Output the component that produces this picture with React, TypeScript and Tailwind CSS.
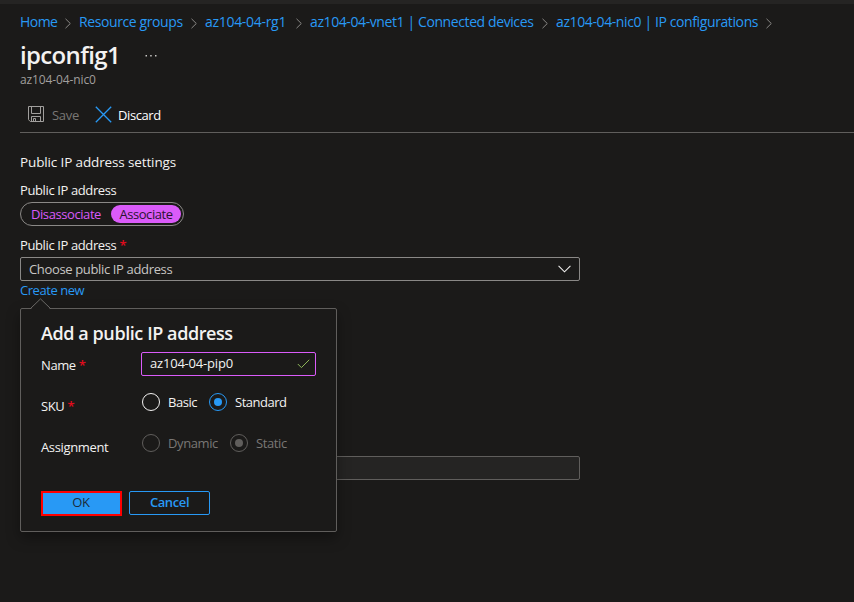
import type { ReactNode } from "react";

function Crumb({ children, className }: { children: ReactNode; className: string }) {
  return (
    <>
      <a className={`block shrink-0 whitespace-nowrap text-[#2899f5] ${className}`}>{children}</a>
      <svg className="mr-[7px] mt-[2px] h-[11px] w-[8px] shrink-0" viewBox="0 0 8 11" fill="none" stroke="#8a8886">
        <path d="M1.5 .8 6.3 5.5 1.5 10.2" />
      </svg>
    </>
  );
}

function Required() {
  return <span className="ml-[3px] font-semibold text-[#e00b1c]">*</span>;
}

function Radio({ label, tone, checked, className }: { label: string; tone: string; checked?: boolean; className: string }) {
  return (
    <label className={`flex shrink-0 items-center whitespace-nowrap ${className}`}>
      <svg className={`mr-2 size-[18px] shrink-0 ${tone}`} viewBox="0 0 18 18">
        <circle cx="9" cy="9" r="8.5" fill="none" stroke="currentColor" />
        {checked && <circle cx="9" cy="9" r="4" fill="currentColor" />}
      </svg>
      {label}
    </label>
  );
}

function AddAddressCallout() {
  return (
    <section className="absolute left-5 top-[308px] h-[224px] w-[317px] rounded-[2px] border border-[#605e5c] bg-[#1b1a19] px-5 shadow-[0_6px_14px_rgba(0,0,0,0.35)]">
      <svg className="absolute -top-[11px] left-[9px] h-[12px] w-[22px]" viewBox="0 0 22 12">
        <path d="M.5 11.5 10.5 1.3 20.5 11.5V12H.5Z" fill="#1b1a19" />
        <path d="M.3 10.7 10.5 .9 20.7 10.7" fill="none" stroke="#6c6a68" />
      </svg>
      <h2 className="mt-[12px] h-6 whitespace-nowrap text-[18px] font-semibold leading-6 tracking-[-0.42px] text-[#f3f2f1]">
        Add a public IP address
      </h2>
      <div className="mt-[7px] flex h-6">
        <div className="mt-1 w-[100px] tracking-[-0.4px]">Name<Required /></div>
        <div className="flex w-[175px] items-center justify-between rounded-[2px] border border-[#da5bf9] pl-2 pr-[5px]">
          <span className="-mt-[2px] tracking-[-0.2px]">az104-04-pip0</span>
          <svg className="h-[10px] w-[13px]" viewBox="0 0 13 10" fill="none" stroke="#8fb85a">
            <path d="M.8 5 4.4 8.6 12.2 .8" />
          </svg>
        </div>
      </div>
      <div className="mt-[17px] flex h-[18px]">
        <div className="mt-1 w-[101px] tracking-[-0.4px]">SKU<Required /></div>
        <Radio label="Basic" tone="text-[#f3f2f1]" className="w-[67px] tracking-[-0.45px]" />
        <Radio label="Standard" tone="text-[#2899f5]" checked className="tracking-[-0.5px]" />
      </div>
      <div className="mt-[23px] flex h-[18px]">
        <div className="mt-1 w-[101px] tracking-[-0.35px]">Assignment</div>
        <Radio label="Dynamic" tone="text-[#605e5c]" className="w-[88px] tracking-[-0.4px] text-[#797775]" />
        <Radio label="Static" tone="text-[#605e5c]" checked className="tracking-[-0.4px] text-[#797775]" />
      </div>
      <div className="mt-[39px] flex gap-[7px]">
        <button className="h-[25px] w-[81px] border-2 border-[#ff0000] bg-[#2899f5] pb-[3px] pr-px leading-[18px] tracking-[-0.4px] text-[#1b2b3a]">OK</button>
        <button className="h-6 w-[81px] rounded-[2px] border border-[#2899f5] pb-[2px] font-semibold leading-5 tracking-[-0.4px] text-[#2899f5]">Cancel</button>
      </div>
    </section>
  );
}

export default function App() {
  return (
    <div className="relative h-[602px] w-[854px] overflow-hidden bg-[#1b1a19] pl-5 font-['Open_Sans','Noto_Sans',sans-serif] text-[13px] leading-[18px] text-[#f3f2f1]">
      <div className="-ml-5 h-1 bg-[#252423]" />
      <nav className="mt-2 flex h-5 items-center text-[14px] leading-5">
        <Crumb className="w-[44px] tracking-[-0.55px]">Home</Crumb>
        <Crumb className="w-[111px] tracking-[-0.4px]">Resource groups</Crumb>
        <Crumb className="w-[90px] tracking-[-0.3px]">az104-04-rg1</Crumb>
        <Crumb className="w-[231px] tracking-[-0.4px]">az104-04-vnet1 | Connected devices</Crumb>
        <Crumb className="w-[209px] tracking-[-0.39px]">az104-04-nic0 | IP configurations</Crumb>
      </nav>
      <header>
        <div className="mt-[7px] flex h-[33px]">
          <h1 className="w-[125px] text-[24px] font-semibold leading-8 tracking-[-0.65px]">ipconfig1</h1>
          <svg className="mt-[16px] h-[2px] w-3" viewBox="0 0 12 2" fill="#c8c6c4">
            <path d="M.5 0H2V1.6H.5ZM5.2 0H6.7V1.6H5.2ZM10 0H11.5V1.6H10Z" />
          </svg>
        </div>
        <p className="h-4 text-[12px] leading-4 tracking-[-0.12px] text-[#a19f9d]">az104-04-nic0</p>
      </header>
      <div className="mt-[13px] flex h-8 items-center border-b border-[#605e5c] pb-[5px] pl-2">
        <svg className="mr-[8px] size-4" viewBox="0 0 16 16" fill="none" stroke="#a19f9d">
          <path d="M.5.5H15.5V15.5H2.3L.5 13.7ZM3.5.5V7.5H12.5V.5M3.5 15.5V10.5H12.5V15.5M5.5 15.5V12.5H7.5V15.5" />
        </svg>
        <span className="mt-[2px] w-[43px] tracking-[-0.3px] text-[#797775]">Save</span>
        <svg className="mr-[6px] size-[17px]" viewBox="0 0 17 17" fill="none" stroke="#2899f5" strokeWidth="1.3">
          <path d="M.8.8 16.2 16.2M16.2.8.8 16.2" />
        </svg>
        <span className="mt-[2px] tracking-[-0.4px] text-white">Discard</span>
      </div>
      <main>
        <h2 className="mt-5 text-[13.5px] tracking-[-0.13px]">Public IP address settings</h2>
        <div className="mt-[10px] text-[13px] tracking-[-0.38px]">Public IP address</div>
        <div className="mt-[3px] flex h-6 w-[164px] items-center rounded-full border border-[#8a8886] pl-[10px] pr-[2px] text-[13px]">
          <span className="w-[80px] tracking-[-0.42px] text-[#da5bf9]">Disassociate</span>
          <span className="h-[18px] w-[70px] rounded-full bg-[#da5bf9] text-center tracking-[-0.45px] text-[#2b1531]">Associate</span>
        </div>
        <div className="mt-[10px] text-[13px] tracking-[-0.38px]">Public IP address<Required /></div>
        <div className="mt-[3px] flex h-6 w-[560px] items-center justify-between rounded-[2px] border border-[#8a8886] pl-2 pr-2 tracking-[-0.35px] text-[#c8c6c4]">
          Choose public IP address
          <svg className="h-2 w-[13px]" viewBox="0 0 14 8" fill="none" stroke="#f3f2f1" strokeWidth="1.1">
            <path d="M.6.7 7 7.1 13.4.7" />
          </svg>
        </div>
        <a className="block tracking-[-0.45px] text-[#2899f5]">Create new</a>
        <div className="mt-[157px] h-6 w-[560px] rounded-[2px] border border-[#605e5c] bg-[#252423]" />
      </main>
      <AddAddressCallout />
    </div>
  );
}
